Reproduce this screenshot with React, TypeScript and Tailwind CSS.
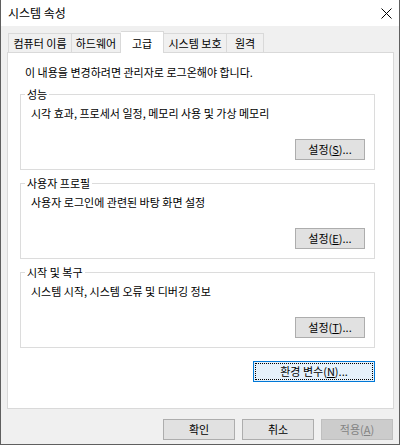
import React from "react";

const font = { fontFamily: '"Noto Sans CJK KR", "Noto Sans", sans-serif' };

function Btn({
  children,
  className = "",
  disabled = false,
}: {
  children: React.ReactNode;
  className?: string;
  disabled?: boolean;
}) {
  return (
    <div
      className={
        "h-[21px] flex items-center justify-center border text-[11px] leading-none " +
        (disabled ? "border-[#bfbfbf] bg-[#cccccc] text-[#838383] " : "border-[#adadad] bg-[#e1e1e1] text-black ") +
        className
      }
    >
      {children}
    </div>
  );
}

function Group({ label, desc, btn }: { label: string; desc: string; btn: React.ReactNode }) {
  return (
    <div className="relative ml-[12px] mr-[18px] h-[76px] border border-[#dcdcdc] flex flex-col">
      <div className="absolute left-[4px] top-[-9px] bg-white px-[2px] text-[11px] leading-[16px]">{label}</div>
      <div className="pl-[10px] pt-[10px] text-[11px] leading-[16px]">{desc}</div>
      <div className="flex-1" />
      <div className="flex justify-end pr-[9px] pb-[9px]">
        <Btn className="w-[70px]">{btn}</Btn>
      </div>
    </div>
  );
}

export default function App() {
  return (
    <div
      style={font}
      className="w-[400px] h-[445px] bg-[#f0f0f0] border-l border-r border-b border-[#5f5f5f] flex flex-col text-black"
    >
      <div className="h-[26px] bg-white flex items-center justify-between pl-[7px] pr-[6px]">
        <span className="text-[12px] leading-none">시스템 속성</span>
        <svg width="11" height="11" viewBox="0 0 11 11" className="mr-[1px]">
          <path d="M0.5 0.5 L10.5 10.5 M10.5 0.5 L0.5 10.5" stroke="#000" strokeWidth="1" />
        </svg>
      </div>
      <div className="flex-1 flex flex-col px-[6px] pt-[5px]">
        <div className="flex items-end h-[21px] pl-[1px] relative z-10">
          <div className="h-[19px] w-[64px] border border-b-0 border-[#d9d9d9] bg-[#f0f0f0] flex items-center justify-center text-[11px]">컴퓨터 이름</div>
          <div className="h-[19px] w-[49px] border border-b-0 border-l-0 border-[#d9d9d9] bg-[#f0f0f0] flex items-center justify-center text-[11px]">하드웨어</div>
          <div className="h-[22px] w-[43px] mb-[-1px] border border-b-0 border-l-0 border-[#d9d9d9] bg-white flex items-start pt-[3px] justify-center text-[11px]">고급</div>
          <div className="h-[19px] w-[63px] border border-b-0 border-l-0 border-[#d9d9d9] bg-[#f0f0f0] flex items-center justify-center text-[11px]">시스템 보호</div>
          <div className="h-[19px] w-[37px] border border-b-0 border-l-0 border-[#d9d9d9] bg-[#f0f0f0] flex items-center justify-center text-[11px]">원격</div>
        </div>
        <div className="h-[357px] w-[387px] border border-[#d9d9d9] bg-white flex flex-col">
          <div className="pl-[17px] pt-[11px] text-[11px] leading-[16px]">이 내용을 변경하려면 관리자로 로그온해야 합니다.</div>
          <div className="mt-[14px] flex flex-col gap-[13px]">
            <Group label="성능" desc="시각 효과, 프로세서 일정, 메모리 사용 및 가상 메모리" btn={<span>설정(<u>S</u>)...</span>} />
            <Group label="사용자 프로필" desc="사용자 로그인에 관련된 바탕 화면 설정" btn={<span>설정(<u>E</u>)...</span>} />
            <Group label="시작 및 복구" desc="시스템 시작, 시스템 오류 및 디버깅 정보" btn={<span>설정(<u>T</u>)...</span>} />
          </div>
          <div className="flex justify-end mr-[18px] mt-[13px]">
            <div className="w-[122px] h-[21px] border border-[#0078d7] bg-[#e5f1fb] p-[1px]">
              <div className="w-full h-full border border-dotted border-black flex items-center justify-center text-[11px] leading-none">
                <span>환경 변수(<u>N</u>)...</span>
              </div>
            </div>
          </div>
        </div>
        <div className="flex justify-end gap-[7px] pt-[10px]">
          <Btn className="w-[72px]">확인</Btn>
          <Btn className="w-[72px]">취소</Btn>
          <Btn className="w-[72px]" disabled>
            <span>적용(<u>A</u>)</span>
          </Btn>
        </div>
      </div>
    </div>
  );
}
